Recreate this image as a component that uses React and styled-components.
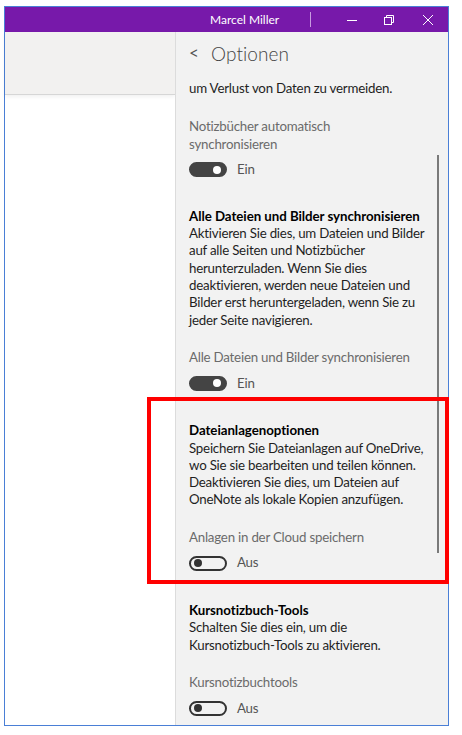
import React from 'react'
import styled, { createGlobalStyle } from 'styled-components'

const GlobalStyle = createGlobalStyle`
  html, body {
    margin: 0;
    padding: 0;
    background: #ffffff;
    font-family: Lato, "Open Sans", sans-serif;
  }
`

const Page = styled.div`
  width: 462px;
  height: 735px;
  padding: 6px 0 0 4px;
  box-sizing: border-box;
`

const Window = styled.div`
  position: relative;
  width: 445px;
  height: 720px;
  border: 1px solid #4a7fd6;
  box-sizing: border-box;
  display: flex;
  flex-direction: column;
  background: #f2f2f2;
`

const TitleBar = styled.div`
  height: 25px;
  background: #7719aa;
  display: flex;
  align-items: center;
  color: #fff;
  flex-shrink: 0;
`

const UserName = styled.div`
  margin-left: 205px;
  font-size: 12px;
  width: 76px;
  text-align: left;
`

const Divider = styled.div`
  width: 1px;
  height: 15px;
  background: #c79be0;
  margin-left: 26px;
`

const WinButton = styled.div`
  width: 40px;
  height: 25px;
  display: flex;
  align-items: center;
  justify-content: center;
  margin-left: ${p => p.$gap || 0}px;
`

const Body = styled.div`
  flex: 1;
  display: flex;
  min-height: 0;
`

const LeftPane = styled.div`
  width: 170px;
  background: #fff;
  display: flex;
  flex-direction: column;
  flex-shrink: 0;
`

const LeftToolbar = styled.div`
  height: 62px;
  background: #f2f1f0;
  border-bottom: 1px solid #d6d6d6;
  box-shadow: 0 2px 4px rgba(0, 0, 0, 0.06);
`

const OptionsPane = styled.div`
  flex: 1;
  border-left: 1px solid #dcdcdc;
  background: #f2f2f2;
  overflow: hidden;
  padding-left: 13px;
  color: #1f1f1f;
  font-size: 13.3px;
  letter-spacing: -0.22px;
  line-height: 17.3px;
`

const Header = styled.div`
  height: 44px;
  display: flex;
  align-items: center;
  color: #444;
  letter-spacing: 0;
`

const BackArrow = styled.span`
  font-size: 17px;
  width: 22px;
  color: #555;
  margin-top: -2px;
`

const Title = styled.span`
  font-size: 19px;
  font-weight: 300;
  letter-spacing: 0.1px;
`

const Paragraph = styled.div`
  margin-top: ${p => p.$top || 0}px;
  width: 248px;
`

const NoWrap = styled.span`
  white-space: nowrap;
`

const Heading = styled.div`
  margin-top: ${p => p.$top || 29}px;
  font-weight: 700;
  letter-spacing: -0.05px;
  color: #000;
`

const Label = styled.div`
  margin-top: ${p => p.$top || 20}px;
  color: #6b6b6b;
  width: 240px;
`

const ToggleRow = styled.div`
  margin-top: 7px;
  height: 20px;
  display: flex;
  align-items: center;
  gap: 10px;
  color: #555;
`

const Track = styled.div`
  width: 38px;
  height: 15px;
  border-radius: 8px;
  box-sizing: border-box;
  position: relative;
  background: ${p => (p.$on ? '#444' : 'transparent')};
  border: 2px solid ${p => (p.$on ? '#444' : '#333')};
`

const Knob = styled.div`
  position: absolute;
  top: 1.5px;
  width: 8px;
  height: 8px;
  border-radius: 50%;
  background: ${p => (p.$on ? '#fff' : '#333')};
  ${p => (p.$on ? 'right: 4px;' : 'left: 3px;')}
`

const Scrollbar = styled.div`
  position: absolute;
  left: 432px;
  top: 148px;
  width: 2px;
  height: 398px;
  background: #7a7a7a;
`

const Highlight = styled.div`
  position: absolute;
  left: 142px;
  top: 390px;
  width: 302px;
  height: 187px;
  border: 4px solid #ff0000;
  box-sizing: border-box;
  pointer-events: none;
`

function Toggle({ on }) {
  return (
    <ToggleRow>
      <Track $on={on}>
        <Knob $on={on} />
      </Track>
      <span>{on ? 'Ein' : 'Aus'}</span>
    </ToggleRow>
  )
}

export default function App() {
  return (
    <Page>
      <GlobalStyle />
      <Window>
        <TitleBar>
          <UserName>Marcel Miller</UserName>
          <Divider />
          <WinButton $gap={21}>
            <svg width="12" height="12" viewBox="0 0 12 12">
              <path d="M1 6.5h10" stroke="#fff" strokeWidth="1" />
            </svg>
          </WinButton>
          <WinButton $gap={-2}>
            <svg width="12" height="12" viewBox="0 0 12 12" fill="none" stroke="#fff" strokeWidth="1">
              <rect x="1.5" y="3.5" width="7" height="7" />
              <path d="M3.5 3.5V1.5h7v7h-2" />
            </svg>
          </WinButton>
          <WinButton $gap={0}>
            <svg width="12" height="12" viewBox="0 0 12 12" fill="none" stroke="#fff" strokeWidth="1">
              <path d="M1 1l10 10M11 1L1 11" />
            </svg>
          </WinButton>
        </TitleBar>
        <Body>
          <LeftPane>
            <LeftToolbar />
          </LeftPane>
          <OptionsPane>
            <Header>
              <BackArrow>&lt;</BackArrow>
              <Title>Optionen</Title>
            </Header>
            <Paragraph $top={4}>um Verlust von Daten zu vermeiden.</Paragraph>

            <Label $top={21}>
              Notizbücher automatisch
              <br />
              synchronisieren
            </Label>
            <Toggle on />

            <Heading $top={28}>Alle Dateien und Bilder synchronisieren</Heading>
            <Paragraph>
              Aktivieren Sie dies, um Dateien und Bilder auf alle Seiten und Notizbücher
              herunterzuladen. Wenn Sie dies deaktivieren, werden neue Dateien und Bilder erst
              heruntergeladen, wenn Sie zu jeder Seite navigieren.
            </Paragraph>
            <Label>Alle Dateien und Bilder synchronisieren</Label>
            <Toggle on />

            <Heading>Dateianlagenoptionen</Heading>
            <Paragraph>
              Speichern Sie Dateianlagen auf OneDrive, wo Sie sie bearbeiten und teilen können.
              Deaktivieren Sie dies, um Dateien auf OneNote als lokale Kopien anzufügen.
            </Paragraph>
            <Label>Anlagen in der Cloud speichern</Label>
            <Toggle />

            <Heading>Kursnotizbuch-Tools</Heading>
            <Paragraph>
              Schalten Sie dies ein, um die <NoWrap>Kursnotizbuch-Tools</NoWrap> zu aktivieren.
            </Paragraph>
            <Label>Kursnotizbuchtools</Label>
            <Toggle />
          </OptionsPane>
        </Body>
        <Scrollbar />
        <Highlight />
      </Window>
    </Page>
  )
}
